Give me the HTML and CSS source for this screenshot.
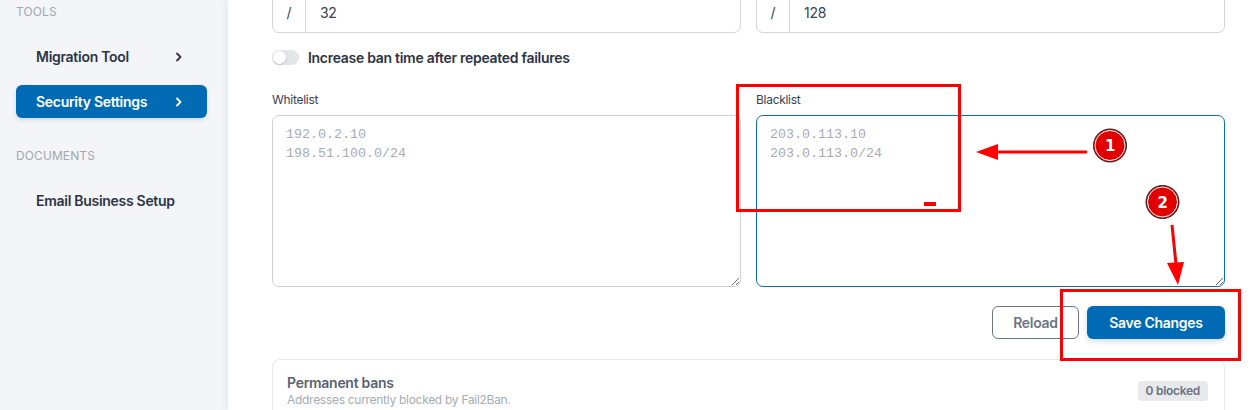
FILE: index.html
```html
<!DOCTYPE html>
<html lang="en">
<head>
  <meta charset="UTF-8" />
  <meta name="viewport" content="width=device-width, initial-scale=1.0" />
  <title>Security Settings</title>
  <link rel="stylesheet" href="styles.css">
</head>
<body>
  <aside class="sidebar">
    <div class="nav-label">Tools</div>
    <a class="nav-item" href="#">Migration Tool
      <svg class="chev" width="8" height="10" viewBox="0 0 8 10"><polyline points="2,1.5 5.5,5 2,8.5" /></svg>
    </a>
    <a class="nav-item active" href="#">Security Settings
      <svg class="chev" width="8" height="10" viewBox="0 0 8 10"><polyline points="2,1.5 5.5,5 2,8.5" /></svg>
    </a>
    <div class="nav-label section">Documents</div>
    <a class="nav-item" href="#">Email Business Setup</a>
  </aside>

  <main class="main">
    <div class="two-col top-row">
      <div class="input-group">
        <span class="prefix">/</span>
        <input type="text" value="32" />
      </div>
      <div class="input-group">
        <span class="prefix">/</span>
        <input type="text" value="128" />
      </div>
    </div>

    <label class="toggle-row">
      <span class="toggle"><span class="knob"></span></span>
      Increase ban time after repeated failures
    </label>

    <div class="two-col fields">
      <div class="field">
        <label>Whitelist</label>
        <textarea placeholder="192.0.2.10&#10;198.51.100.0/24"></textarea>
      </div>
      <div class="field">
        <label>Blacklist</label>
        <textarea class="focused" placeholder="203.0.113.10&#10;203.0.113.0/24"></textarea>
      </div>
    </div>

    <div class="actions">
      <button class="btn btn-outline">Reload</button>
      <button class="btn btn-primary">Save Changes</button>
    </div>

    <section class="card">
      <div class="card-head">
        <div>
          <h3>Permanent bans</h3>
          <p>Addresses currently blocked by Fail2Ban.</p>
        </div>
        <span class="badge">0 blocked</span>
      </div>
    </section>
  </main>

  <!-- annotation layer -->
  <svg class="marks" width="1250" height="410" viewBox="0 0 1250 410">
    <rect x="737.5" y="85.5" width="222" height="125" fill="none" stroke="#ff0000" stroke-width="3" />
    <rect x="924" y="202" width="12" height="4" fill="#ff0000" />
    <line x1="996" y1="152" x2="1087" y2="152" stroke="#ff0000" stroke-width="3" />
    <polygon points="976,152 998,144 998,160" fill="#ff0000" />
    <circle cx="1110" cy="145.5" r="16.5" fill="#e00000" stroke="#222" stroke-width="1" />
    <circle cx="1110" cy="145.5" r="15" fill="none" stroke="#fff" stroke-width="1" />
    <text x="1110" y="151" class="num">1</text>
    <circle cx="1162.5" cy="202" r="16.5" fill="#e00000" stroke="#222" stroke-width="1" />
    <circle cx="1162.5" cy="202" r="15" fill="none" stroke="#fff" stroke-width="1" />
    <text x="1162.5" y="207.5" class="num">2</text>
    <line x1="1172" y1="225" x2="1176" y2="264" stroke="#ff0000" stroke-width="3" />
    <polygon points="1178,285 1167,263 1184,262" fill="#ff0000" />
    <rect x="1061.5" y="290.5" width="178" height="69" fill="none" stroke="#ff0000" stroke-width="3" />
  </svg>
</body>
</html>
```

FILE: styles.css
```css
body {
  margin: 0;
  font-family: Inter, "Noto Sans", sans-serif;
  letter-spacing: -0.018em;
  color: #2c3445;
  display: flex;
  height: 410px;
  overflow: hidden;
  position: relative;
  background: #ffffff;
}
.sidebar {
  width: 228px;
  flex-shrink: 0;
  background: #f4f5f8;
  padding: 4px 21px 0 16px;
  box-sizing: border-box;
}
.nav-label {
  font-size: 12px;
  line-height: 16px;
  color: #a3a7b0;
  text-transform: uppercase;
  letter-spacing: 0.1px;
  margin-bottom: 20px;
}
.nav-label.section {
  margin-top: 30px;
}
.nav-item {
  display: flex;
  align-items: center;
  justify-content: space-between;
  height: 33px;
  padding: 0 24px 0 20px;
  border-radius: 6px;
  font-size: 14px;
  font-weight: 600;
  color: #2c3445;
  text-decoration: none;
  margin-bottom: 12px;
}
.nav-item .chev polyline {
  fill: none;
  stroke: #2c3445;
  stroke-width: 1.8;
  stroke-linecap: round;
  stroke-linejoin: round;
}
.nav-item.active {
  background: #006bb4;
  color: #ffffff;
  box-shadow: 0 2px 4px rgba(0, 60, 120, 0.15);
}
.nav-item.active .chev polyline {
  stroke: #ffffff;
}
.main {
  flex: 1;
  padding: 0 25px 0 44px;
  box-shadow: -3px 0 8px rgba(0, 0, 0, 0.05);
  position: relative;
  z-index: 1;
  background: #ffffff;
}
.two-col {
  display: grid;
  grid-template-columns: 1fr 1fr;
  gap: 15px;
}
.top-row {
  margin-top: -9px;
}
.input-group {
  display: flex;
  height: 42px;
  border: 1px solid #d4d5d9;
  border-radius: 7px;
  box-sizing: border-box;
}
.input-group .prefix {
  width: 32px;
  border-right: 1px solid #d4d5d9;
  display: flex;
  align-items: center;
  justify-content: center;
  font-size: 14px;
  color: #3a4150;
}
.input-group input {
  border: none;
  outline: none;
  flex: 1;
  padding: 0 14px;
  font-family: inherit;
  font-size: 14px;
  letter-spacing: inherit;
  color: #3a4150;
  background: transparent;
  border-radius: 7px;
}
.toggle-row {
  display: flex;
  align-items: center;
  gap: 9px;
  margin-top: 14px;
  height: 20px;
  font-size: 14px;
  font-weight: 600;
  color: #2c3445;
}
.toggle {
  width: 27px;
  height: 15px;
  border-radius: 8px;
  background: #e4e5e9;
  position: relative;
}
.toggle .knob {
  position: absolute;
  left: 1px;
  top: 1px;
  width: 13px;
  height: 13px;
  border-radius: 50%;
  background: #ffffff;
  box-shadow: 0 1px 2px rgba(0, 0, 0, 0.2);
}
.fields {
  margin-top: 24px;
}
.field label {
  display: block;
  font-size: 12px;
  line-height: 18px;
  color: #3a4150;
  margin-bottom: 6px;
}
.field textarea {
  display: block;
  width: 100%;
  height: 172px;
  box-sizing: border-box;
  border: 1px solid #cfd0d4;
  border-radius: 7px;
  padding: 9px 13px;
  font-family: "Liberation Mono", monospace;
  font-size: 13.33px;
  letter-spacing: 0;
  line-height: 19px;
  color: #3a4150;
  outline: none;
}
.field textarea::placeholder {
  color: #a8abb4;
}
.field textarea.focused {
  border-color: #0b6db3;
}
.actions {
  display: flex;
  justify-content: flex-end;
  gap: 8px;
  margin-top: 19px;
}
.btn {
  height: 33px;
  border-radius: 6px;
  font-family: inherit;
  font-size: 14px;
  font-weight: 600;
  letter-spacing: inherit;
  cursor: pointer;
}
.btn-outline {
  width: 87px;
  background: #ffffff;
  border: 1px solid #6b7585;
  color: #6b7585;
}
.btn-primary {
  width: 138px;
  background: #006bb4;
  border: none;
  color: #ffffff;
  box-shadow: 0 2px 6px rgba(0, 60, 120, 0.2);
}
.card {
  margin-top: 20px;
  border: 1px solid #e6e7ea;
  border-radius: 8px;
  padding: 14px 16px 14px 14px;
}
.card-head {
  display: flex;
  justify-content: space-between;
  align-items: center;
}
.card h3 {
  margin: 0;
  font-size: 14px;
  line-height: 18px;
  font-weight: 600;
  color: #5b6272;
}
.card p {
  margin: 0;
  font-size: 12px;
  line-height: 16px;
  color: #a8abb4;
}
.badge {
  background: #e8e9ec;
  color: #6b7280;
  font-size: 12px;
  font-weight: 600;
  padding: 0 8px;
  height: 20px;
  line-height: 20px;
  border-radius: 4px;
}
.marks {
  position: absolute;
  top: 0;
  left: 0;
  z-index: 5;
  pointer-events: none;
}
.marks .num {
  font-family: "DejaVu Sans", sans-serif;
  font-size: 15px;
  font-weight: 700;
  fill: #ffffff;
  text-anchor: middle;
}
```
